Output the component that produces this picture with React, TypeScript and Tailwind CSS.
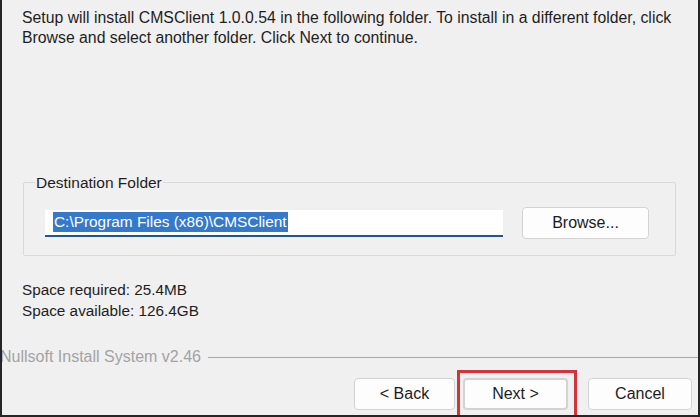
import React from "react";

const font = { fontFamily: '"Liberation Sans", Arial, sans-serif' };

function Btn({ children, className = "" }: { children: React.ReactNode; className?: string }) {
  return (
    <div
      className={`flex h-[32px] items-center justify-center rounded-[4px] border border-[#d3d3d3] bg-[#fdfdfd] text-[16px] text-[#1c1c1c] ${className}`}
    >
      {children}
    </div>
  );
}

export default function App() {
  return (
    <div
      className="relative flex h-[417px] w-[700px] flex-col overflow-hidden border-x-2 border-b-2 border-[#262626] bg-[#f0f0f0] text-[#1e1e1e]"
      style={font}
    >
      <p className="ml-[20px] mt-[8px] whitespace-nowrap text-[15.8px] leading-[20px]">
        Setup will install CMSClient 1.0.0.54 in the following folder. To install in a different folder, click
        <br />
        Browse and select another folder. Click Next to continue.
      </p>

      <div className="relative ml-[21px] mt-[134px] h-[74px] w-[653px] rounded-[2px] border border-[#d9d9d9]">
        <span className="absolute left-[11px] top-[-10px] bg-[#f0f0f0] px-[1px] text-[15.5px] leading-[20px]">
          Destination Folder
        </span>
        <div className="flex items-center pl-[21px] pt-[24px]">
          <div className="flex h-[27px] w-[458px] items-center border-b-2 border-[#23568c] bg-white pl-[8px]">
            <span className="bg-[#3479cc] px-[1px] text-[15.4px] leading-[20px] text-white">
              C:\Program Files (x86)\CMSClient
            </span>
          </div>
          <Btn className="ml-[19px] h-[30px] w-[127px]">Browse...</Btn>
        </div>
      </div>

      <div className="ml-[20px] mt-[23px] text-[15.3px] leading-[21px]">
        <div>Space required: 25.4MB</div>
        <div>Space available: 126.4GB</div>
      </div>

      <div className="ml-[-2px] mt-[26px] flex h-[20px] items-center">
        <span className="whitespace-nowrap text-[16px] leading-[20px] text-[#a3a3a3]">Nullsoft Install System v2.46</span>
        <div className="ml-[7px] h-px flex-1 bg-[#a8a8a8]" />
      </div>

      <div className="mr-[6px] mt-[11px] flex justify-end">
        <Btn className="w-[101px]">&lt; Back</Btn>
        <div className="relative ml-[8px]">
          <Btn className="w-[105px] border-2 border-[#4d7cb0]">Next &gt;</Btn>
          <div className="absolute -bottom-[12px] -left-[6px] -right-[9px] -top-[8px] border-[3px] border-[#d3343c]" />
        </div>
        <Btn className="ml-[20px] w-[104px]">Cancel</Btn>
      </div>
    </div>
  );
}
